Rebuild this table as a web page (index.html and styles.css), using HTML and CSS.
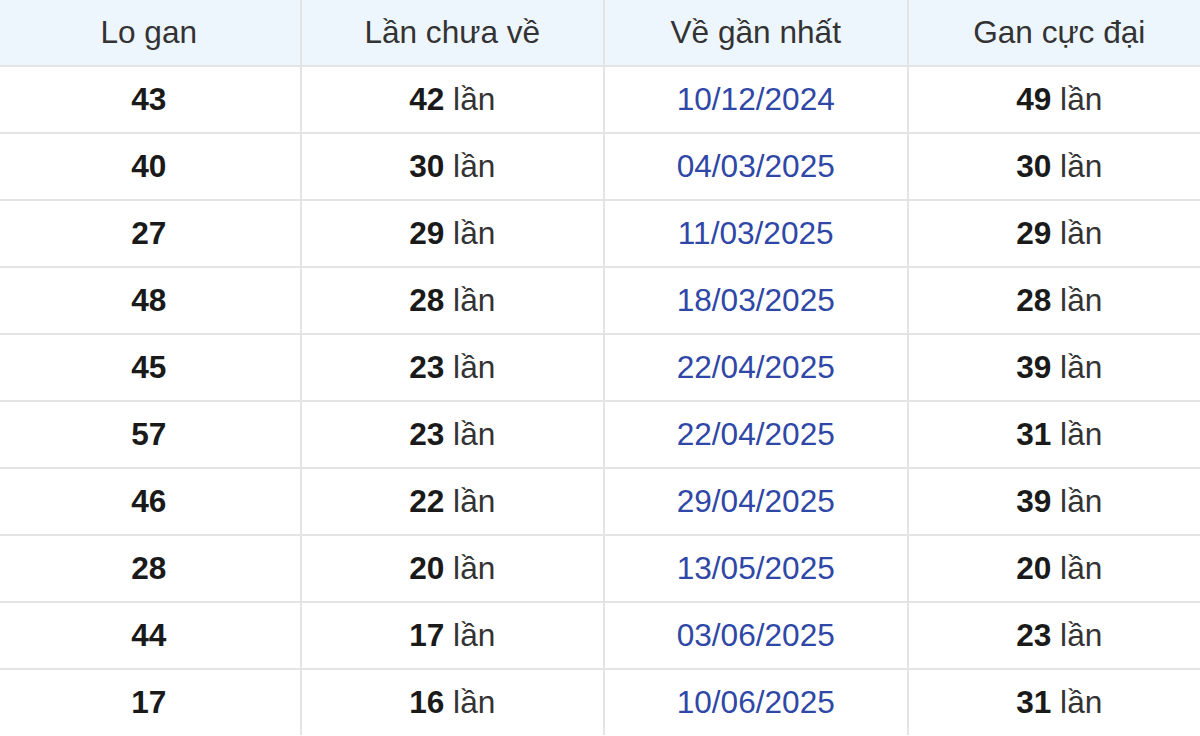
FILE: index.html
```html
<!DOCTYPE html>
<html lang="vi">
<head>
<meta charset="utf-8">
<link rel="stylesheet" href="styles.css">
</head>
<body>
<table class="gan-table">
  <thead>
    <tr><th>Lo gan</th><th>Lần chưa về</th><th>Về gần nhất</th><th>Gan cực đại</th></tr>
  </thead>
  <tbody>
    <tr><td class="num">43</td><td><b>42</b> lần</td><td class="date">10/12/2024</td><td><b>49</b> lần</td></tr>
    <tr><td class="num">40</td><td><b>30</b> lần</td><td class="date">04/03/2025</td><td><b>30</b> lần</td></tr>
    <tr><td class="num">27</td><td><b>29</b> lần</td><td class="date">11/03/2025</td><td><b>29</b> lần</td></tr>
    <tr><td class="num">48</td><td><b>28</b> lần</td><td class="date">18/03/2025</td><td><b>28</b> lần</td></tr>
    <tr><td class="num">45</td><td><b>23</b> lần</td><td class="date">22/04/2025</td><td><b>39</b> lần</td></tr>
    <tr><td class="num">57</td><td><b>23</b> lần</td><td class="date">22/04/2025</td><td><b>31</b> lần</td></tr>
    <tr><td class="num">46</td><td><b>22</b> lần</td><td class="date">29/04/2025</td><td><b>39</b> lần</td></tr>
    <tr><td class="num">28</td><td><b>20</b> lần</td><td class="date">13/05/2025</td><td><b>20</b> lần</td></tr>
    <tr><td class="num">44</td><td><b>17</b> lần</td><td class="date">03/06/2025</td><td><b>23</b> lần</td></tr>
    <tr class="last"><td class="num">17</td><td><b>16</b> lần</td><td class="date">10/06/2025</td><td><b>31</b> lần</td></tr>
  </tbody>
</table>
</body>
</html>
```

FILE: styles.css
```css
html, body {
  margin: 0;
  padding: 0;
  background: #ffffff;
}

body {
  font-family: "Liberation Sans", Arial, sans-serif;
  color: #222222;
  overflow: hidden;
}

.gan-table {
  width: 1216px;
  margin-left: -4px;
  table-layout: fixed;
  border-collapse: collapse;
  font-size: 31.6px;
}

.gan-table th,
.gan-table td {
  border: 2px solid #e4e4e4;
  text-align: center;
  vertical-align: middle;
  padding: 0;
}

.gan-table th {
  background: #eef6fd;
  font-weight: normal;
  color: #333333;
  height: 65px;
  border-top: none;
}

.gan-table td {
  height: 65px;
  color: #333333;
}

.gan-table tr.last td {
  border-bottom: none;
}

.gan-table td b,
.gan-table td.num {
  font-weight: bold;
  color: #1a1a1a;
}

.gan-table td.date {
  color: #2f47a6;
}
```
